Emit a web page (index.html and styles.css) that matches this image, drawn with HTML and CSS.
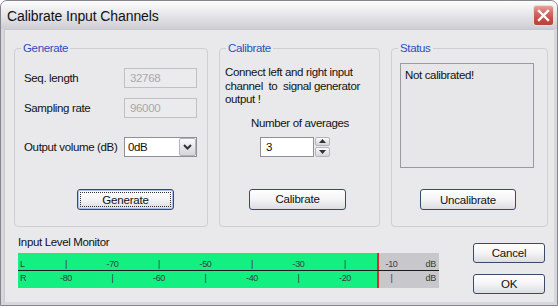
FILE: index.html
```html
<!DOCTYPE html>
<html>
<head>
<meta charset="utf-8">
<link rel="stylesheet" href="styles.css">
</head>
<body>
<div class="window">
  <div class="titlebar">
    <span class="title">Calibrate Input Channels</span>
    <span class="close"><svg width="13" height="13" viewBox="0 0 13 13"><path d="M2 2 L11 11 M11 2 L2 11" stroke="#fff" stroke-width="2.4" stroke-linecap="square"/></svg></span>
  </div>
  <div class="client">
    <div class="groups">
      <div class="group gen">
        <span class="legend">Generate</span>
        <div class="form">
          <span class="lbl">Seq. length</span><span class="tb disabled">32768</span>
          <span class="lbl">Sampling rate</span><span class="tb disabled">96000</span>
          <span class="lbl vol">Output volume (dB)</span>
          <span class="combo vol"><span class="cval">0dB</span><span class="drop"><svg width="9" height="6" viewBox="0 0 9 6"><path d="M1 1 L4.5 4.5 L8 1" fill="none" stroke="#333" stroke-width="2"/></svg></span></span>
        </div>
        <span class="btn focus genbtn"><span class="focusring">Generate</span></span>
      </div>
      <div class="group cal">
        <span class="legend">Calibrate</span>
        <p class="msg">Connect left and right input channel&nbsp; to&nbsp; signal generator output !</p>
        <p class="avg">Number of averages</p>
        <div class="spin">
          <span class="tb spinval">3</span>
          <span class="arrows">
            <span class="arr"><svg width="7" height="4" viewBox="0 0 7 4"><path d="M0 4 L3.5 0 L7 4Z" fill="#333"/></svg></span>
            <span class="arr"><svg width="7" height="4" viewBox="0 0 7 4"><path d="M0 0 L3.5 4 L7 0Z" fill="#333"/></svg></span>
          </span>
        </div>
        <span class="btn calbtn">Calibrate</span>
      </div>
      <div class="group stat">
        <span class="legend">Status</span>
        <div class="statbox">Not calibrated!</div>
        <span class="btn uncbtn">Uncalibrate</span>
      </div>
    </div>
    <div class="bottom">
      <div class="monitor">
        <div class="mlabel">Input Level Monitor</div>
        <div class="meter">
          <div class="row rowl">
            <span class="ch">L</span>
            <span class="c">|</span><span class="c">-70</span><span class="c">|</span><span class="c">-50</span><span class="c">|</span><span class="c">-30</span><span class="c">|</span><span class="c">-10</span>
            <span class="db">dB</span>
          </div>
          <div class="row rowr">
            <span class="ch">R</span>
            <span class="c">-80</span><span class="c">|</span><span class="c">-60</span><span class="c">|</span><span class="c">-40</span><span class="c">|</span><span class="c">-20</span><span class="c">|</span>
            <span class="db">dB</span>
          </div>
        </div>
      </div>
      <div class="buttons">
        <span class="btn small">Cancel</span>
        <span class="btn small">OK</span>
      </div>
    </div>
  </div>
</div>
</body>
</html>
```
FILE: styles.css
```css
* { box-sizing: border-box; }
html, body { margin: 0; padding: 0; background: #fff; }
body {
  font-family: "Liberation Sans", Arial, sans-serif;
  font-size: 11.5px;
  letter-spacing: -0.35px;
  color: #111;
}
.window {
  width: 558px;
  height: 306px;
  border: 1px solid #85858d;
  border-radius: 7px 7px 0 0;
  background: #d6d6dc;
  display: flex;
  flex-direction: column;
  overflow: hidden;
}
.titlebar {
  height: 28px;
  flex: none;
  display: flex;
  align-items: center;
  justify-content: space-between;
  padding: 0 3px 0 6px;
  background: linear-gradient(#fdfdfd 0%, #ededf0 35%, #dcdce1 70%, #cdcdd4 100%);
}
.title {
  font-size: 14px;
  letter-spacing: -0.1px;
  color: #111;
  padding-top: 1px;
}
.close {
  width: 21px;
  height: 21px;
  border: 1px solid #f2dcd8;
  border-radius: 3px;
  background: linear-gradient(#e4a49b 0%, #d06d62 35%, #bf4b41 75%, #b3473f 100%);
  display: flex;
  align-items: center;
  justify-content: center;
  margin-top: 1px;
}
.client {
  flex: 1;
  margin: 0 3px 3px 3px;
  background: #e9e9ec;
  border-top: 1px solid #c8c8ce;
  border-left: 1px solid #c8c8ce;
  display: flex;
  flex-direction: column;
}
.groups {
  display: flex;
  gap: 11px;
  padding: 18px 0 0 9px;
}
.group {
  position: relative;
  height: 179px;
  border: 1px solid #cfcfd3;
  border-radius: 4px;
  display: flex;
  flex-direction: column;
}
.legend {
  position: absolute;
  top: -8px;
  left: 6px;
  padding: 0 2px;
  background: #e9e9ec;
  color: #2a4fbf;
  line-height: 14px;
}
.gen { width: 194px; padding: 19px 0 0 9px; }
.cal { width: 161px; padding: 17px 0 0 5px; }
.stat { width: 157px; padding: 14px 0 0 8px; }

.form {
  display: grid;
  grid-template-columns: 100px 73px;
  row-gap: 10px;
  align-items: center;
}
.form .vol { margin-top: 9px; }
.tb {
  height: 20px;
  border: 1px solid #8f9096;
  background: #fff;
  display: flex;
  align-items: center;
  padding-left: 5px;
}
.tb.disabled {
  border-color: #c0c0c4;
  background: #ebebee;
  color: #a8a8ac;
}
.combo {
  height: 20px;
  border: 1px solid #8f9096;
  background: #fff;
  display: flex;
  align-items: center;
  padding-left: 3px;
}
.cval { flex: 1; }
.drop {
  width: 17px;
  height: 18px;
  border: 1px solid #b4b4bc;
  border-radius: 2px;
  background: linear-gradient(#fbfbfc, #d4d4da);
  display: flex;
  align-items: center;
  justify-content: center;
}
.btn {
  height: 21px;
  border: 1px solid #3b4a66;
  border-radius: 3px;
  background: linear-gradient(#ffffff 0%, #f4f4f6 50%, #dcdce2 100%);
  display: flex;
  align-items: center;
  justify-content: center;
  letter-spacing: -0.2px;
  color: #111;
}
.genbtn { width: 97px; margin: 32px 0 0 53px; padding: 2px; box-shadow: inset 0 0 0 1px #a9c0ea; }
.focusring {
  width: 100%;
  height: 100%;
  border: 1px dotted #333;
  display: flex;
  align-items: center;
  justify-content: center;
}
.msg { margin: 0; line-height: 13.5px; width: 152px; }
.avg { margin: 10px 0 0 0; width: 150px; text-align: center; line-height: 13px; }
.spin { display: flex; margin: 7px 0 0 35px; }
.spinval { width: 54px; height: 20px; }
.arrows { display: flex; flex-direction: column; gap: 1px; padding-left: 1px; }
.arr {
  width: 15px;
  height: 9.5px;
  border: 1px solid #b4b4bc;
  border-radius: 2px;
  background: linear-gradient(#fbfbfc, #d4d4da);
  display: flex;
  align-items: center;
  justify-content: center;
}
.calbtn { width: 97px; margin: 32px 0 0 24px; }
.statbox {
  width: 134px;
  height: 105px;
  border: 1px solid #9a9aa0;
  background: #e7e7ea;
  padding: 5px 0 0 4px;
}
.uncbtn { width: 96px; margin: 21px 0 0 20px; }

.bottom {
  display: flex;
  justify-content: space-between;
  padding: 0 9px 0 13px;
}
.mlabel { margin-top: 8px; line-height: 14px; }
.meter {
  width: 421px;
  height: 35px;
  margin-top: 4px;
  background: linear-gradient(to right, #14ef82 0, #14ef82 359px, #e0283a 359px, #e0283a 361px, #c8c8cc 361px);
  font-size: 9px;
  letter-spacing: -0.3px;
  color: #3a3a3a;
  display: flex;
  flex-direction: column;
}
.row {
  display: flex;
  align-items: center;
  padding-left: 2px;
}
.rowl { height: 18px; border-bottom: 1px solid #1a1a1a; padding-top: 4px; }
.rowr { height: 16px; padding-bottom: 2px; }
.ch { width: 22.75px; }
.c { width: 46.5px; text-align: center; }
.db { margin-left: auto; padding-right: 3px; }
.buttons {
  display: flex;
  flex-direction: column;
  gap: 11px;
  margin-top: 16px;
}
.small { width: 72px; height: 20px; }
```
